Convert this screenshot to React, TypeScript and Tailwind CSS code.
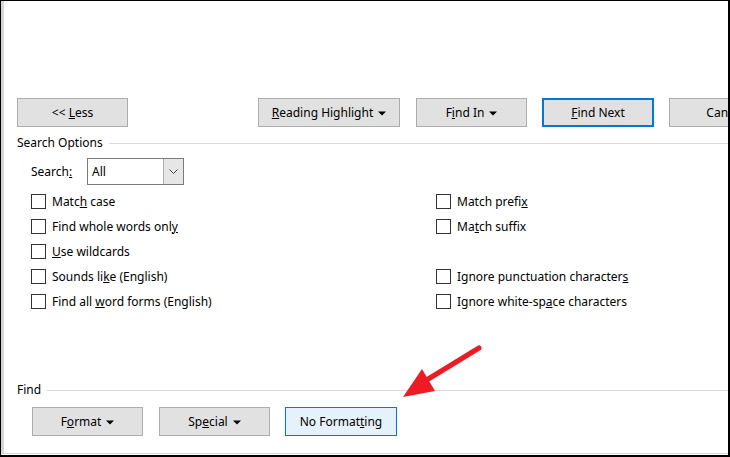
import React from 'react';

const Caret = () => (
  <svg width="8" height="5" viewBox="0 0 8 5" className="ml-[5px] inline-block">
    <path d="M0 0.5 H8 L4 4.5 Z" fill="#000" />
  </svg>
);

const Btn = ({
  children,
  className = '',
  tone = 'border border-[#adadad] bg-[#e1e1e1]',
}: {
  children: React.ReactNode;
  className?: string;
  tone?: string;
}) => (
  <div
    className={`flex h-[29px] shrink-0 items-center justify-center pt-px text-[12px] text-black ${tone} ${className}`}
  >
    {children}
  </div>
);

const Check = ({ children }: { children: React.ReactNode }) => (
  <div className="flex h-[25px] items-center">
    <div className="h-[15px] w-[15px] border border-[#333] bg-white" />
    <span className="ml-[6px] text-[12px] text-black">{children}</span>
  </div>
);

const SectionHead = ({ label }: { label: string }) => (
  <div className="flex items-center pl-[13px]">
    <span className="text-[12px] text-black leading-[16px]">{label}</span>
    <div className="ml-[6px] h-px flex-1 bg-[#d9d9d9]" />
  </div>
);

export default function App() {
  return (
    <div
      className="relative h-[457px] w-[730px] overflow-hidden border-t border-l border-r-2 border-b-2 border-black bg-white"
      style={{ fontFamily: '"Noto Sans", "Open Sans", sans-serif' }}
    >
      <div className="mb-px flex h-[453px] flex-col border-l-[3px] border-b border-[#d6d6d6]">
        {/* buttons row */}
        <div className="mt-[97px] flex overflow-hidden pl-[13px]">
          <Btn className="w-[111px]">
            <span>
              &lt;&lt; <u>L</u>ess
            </span>
          </Btn>
          <Btn className="ml-[130px] w-[142px]">
            <span>
              <u>R</u>eading Highlight
            </span>
            <Caret />
          </Btn>
          <Btn className="ml-[16px] w-[111px]">
            <span>
              F<u>i</u>nd In
            </span>
            <Caret />
          </Btn>
          <Btn className="ml-[15px] w-[112px]" tone="border-2 border-[#0078d7] bg-[#e1e1e1]">
            <span>
              <u>F</u>ind Next
            </span>
          </Btn>
          <Btn className="ml-[15px] w-[112px]">
            <span>Cancel</span>
          </Btn>
        </div>

        {/* search options */}
        <div className="mt-[8px]">
          <SectionHead label="Search Options" />
        </div>

        <div className="mt-[7px] flex items-center pl-[27px]">
          <span className="w-[56px] text-[12px] text-black">
            Search<u>:</u>
          </span>
          <div className="flex h-[27px] w-[97px] border border-[#7a7a7a] bg-white">
            <span className="flex flex-1 items-center pl-[4px] text-[12px] text-black">All</span>
            <div className="flex w-[20px] items-center justify-center border-l border-[#adadad] bg-[#e6e6e6]">
              <svg width="9" height="6" viewBox="0 0 9 6">
                <path d="M0.5 0.5 L4.5 4.5 L8.5 0.5" fill="none" stroke="#444" strokeWidth="1" />
              </svg>
            </div>
          </div>
        </div>

        <div className="mt-[4px] grid grid-cols-[405px_1fr] pl-[27px]">
          <div className="flex flex-col">
            <Check>
              Matc<u>h</u> case
            </Check>
            <Check>
              Find whole words onl<u>y</u>
            </Check>
            <Check>
              <u>U</u>se wildcards
            </Check>
            <Check>
              Sounds li<u>k</u>e (English)
            </Check>
            <Check>
              Find all <u>w</u>ord forms (English)
            </Check>
          </div>
          <div className="flex flex-col">
            <Check>
              Match prefi<u>x</u>
            </Check>
            <Check>
              Ma<u>t</u>ch suffix
            </Check>
            <div className="h-[25px]" />
            <Check>
              Ignore punctuation character<u>s</u>
            </Check>
            <Check>
              Ignore white-sp<u>a</u>ce characters
            </Check>
          </div>
        </div>

        {/* find */}
        <div className="mt-[68px]">
          <SectionHead label="Find" />
        </div>

        <div className="mt-[9px] flex pl-[28px]">
          <Btn className="h-[28px] w-[111px]">
            <span>
              F<u>o</u>rmat
            </span>
            <Caret />
          </Btn>
          <Btn className="ml-[16px] h-[28px] w-[111px]">
            <span>
              Sp<u>e</u>cial
            </span>
            <Caret />
          </Btn>
          <Btn className="ml-[15px] h-[28px] w-[112px]" tone="border border-[#0078d7] bg-[#e5f1fb]">
            <span>
              No Format<u>t</u>ing
            </span>
          </Btn>
        </div>
      </div>

      {/* red arrow annotation */}
      <svg
        className="pointer-events-none absolute left-0 top-0"
        width="730"
        height="457"
        viewBox="0 0 730 457"
      >
        <line x1="478" y1="347" x2="424" y2="380" stroke="#ed1c24" strokeWidth="5" strokeLinecap="round" />
        <path d="M402 396 L421 368 L434 390 Z" fill="#ed1c24" />
      </svg>
    </div>
  );
}
